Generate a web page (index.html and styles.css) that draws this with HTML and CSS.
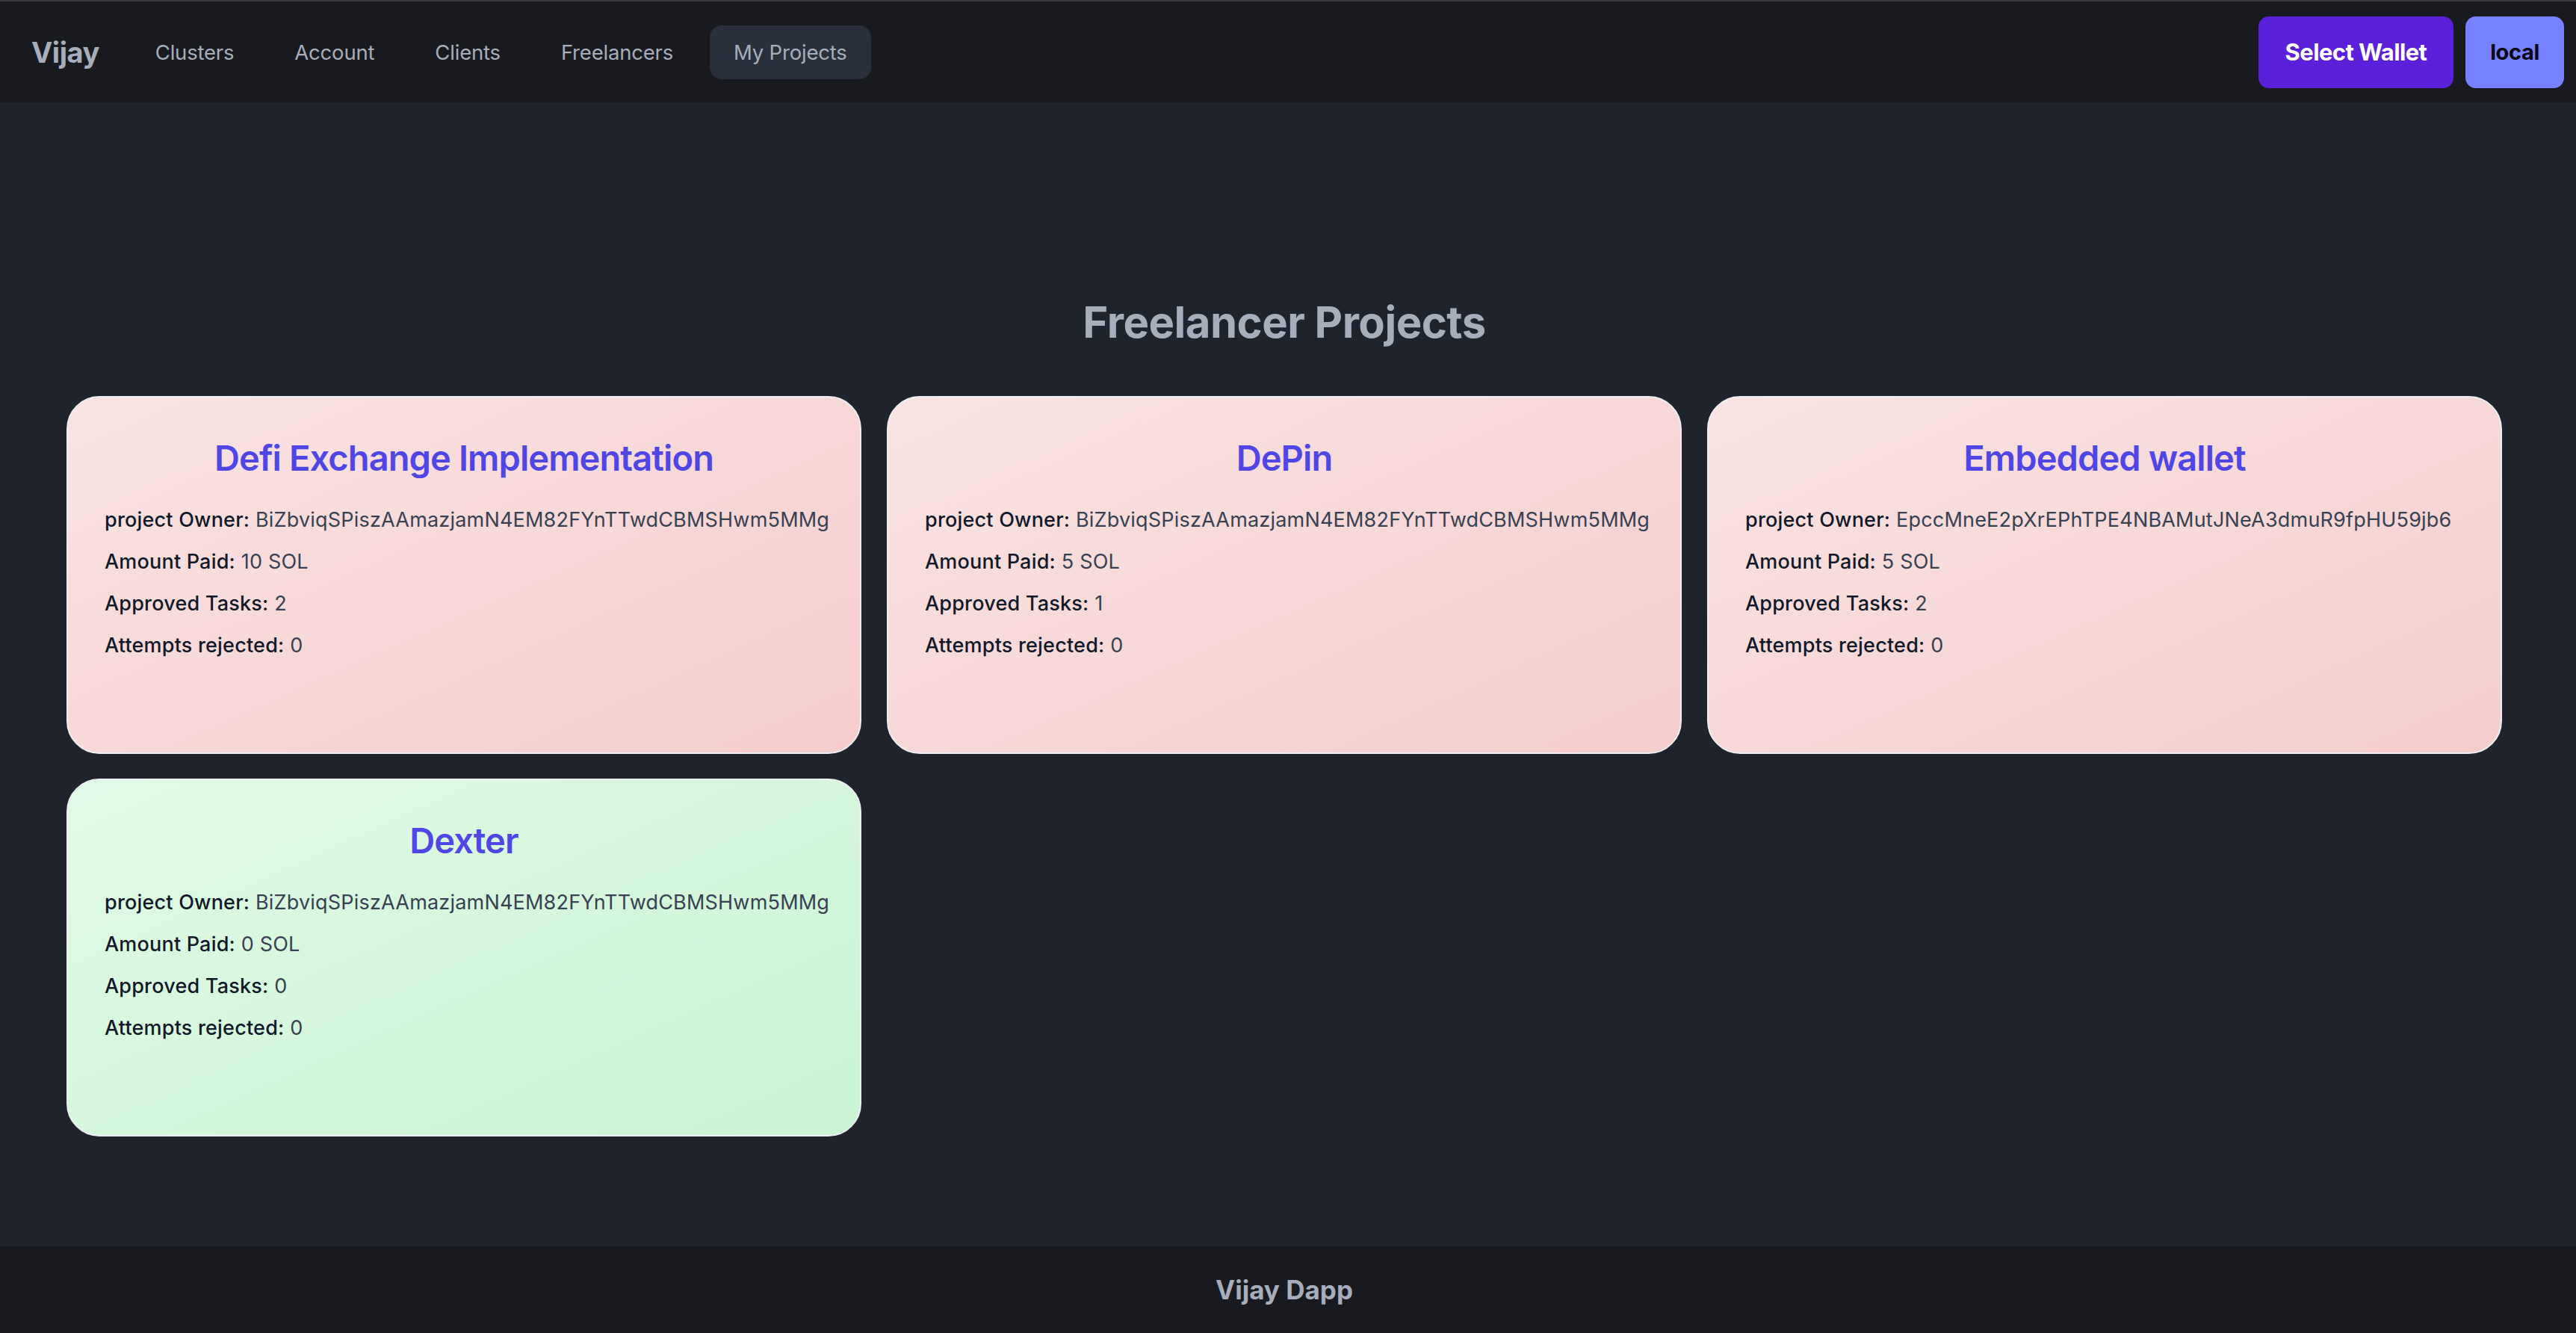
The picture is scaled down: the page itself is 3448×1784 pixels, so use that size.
FILE: index.html
```html
<!DOCTYPE html>
<html lang="en">
<head>
<meta charset="utf-8">
<title>Vijay Dapp</title>
<link rel="stylesheet" href="styles.css">
</head>
<body>
<div class="app">
  <header class="navbar">
    <div class="nav-left">
      <a class="brand">Vijay</a>
      <ul class="menu">
        <li><a class="menu-item">Clusters</a></li>
        <li><a class="menu-item">Account</a></li>
        <li><a class="menu-item">Clients</a></li>
        <li><a class="menu-item">Freelancers</a></li>
        <li><a class="menu-item active">My Projects</a></li>
      </ul>
    </div>
    <div class="nav-right">
      <button class="btn-wallet">Select Wallet</button>
      <button class="btn-cluster">local</button>
    </div>
  </header>

  <main class="main">
    <h1 class="page-title">Freelancer Projects</h1>
    <div class="grid">
      <div class="card card-red">
        <h2 class="card-title">Defi Exchange Implementation</h2>
        <p class="row"><span class="label">project Owner:</span> <span class="value">BiZbviqSPiszAAmazjamN4EM82FYnTTwdCBMSHwm5MMg</span></p>
        <p class="row"><span class="label">Amount Paid:</span> <span class="value">10 SOL</span></p>
        <p class="row"><span class="label">Approved Tasks:</span> <span class="value">2</span></p>
        <p class="row"><span class="label">Attempts rejected:</span> <span class="value">0</span></p>
      </div>
      <div class="card card-red">
        <h2 class="card-title">DePin</h2>
        <p class="row"><span class="label">project Owner:</span> <span class="value">BiZbviqSPiszAAmazjamN4EM82FYnTTwdCBMSHwm5MMg</span></p>
        <p class="row"><span class="label">Amount Paid:</span> <span class="value">5 SOL</span></p>
        <p class="row"><span class="label">Approved Tasks:</span> <span class="value">1</span></p>
        <p class="row"><span class="label">Attempts rejected:</span> <span class="value">0</span></p>
      </div>
      <div class="card card-red">
        <h2 class="card-title">Embedded wallet</h2>
        <p class="row"><span class="label">project Owner:</span> <span class="value">EpccMneE2pXrEPhTPE4NBAMutJNeA3dmuR9fpHU59jb6</span></p>
        <p class="row"><span class="label">Amount Paid:</span> <span class="value">5 SOL</span></p>
        <p class="row"><span class="label">Approved Tasks:</span> <span class="value">2</span></p>
        <p class="row"><span class="label">Attempts rejected:</span> <span class="value">0</span></p>
      </div>
      <div class="card card-green">
        <h2 class="card-title">Dexter</h2>
        <p class="row"><span class="label">project Owner:</span> <span class="value">BiZbviqSPiszAAmazjamN4EM82FYnTTwdCBMSHwm5MMg</span></p>
        <p class="row"><span class="label">Amount Paid:</span> <span class="value">0 SOL</span></p>
        <p class="row"><span class="label">Approved Tasks:</span> <span class="value">0</span></p>
        <p class="row"><span class="label">Attempts rejected:</span> <span class="value">0</span></p>
      </div>
    </div>
  </main>

  <footer class="footer">
    <p class="footer-text">Vijay Dapp</p>
  </footer>
</div>
</body>
</html>
```

FILE: styles.css
```css
* { box-sizing: border-box; }

html, body {
  margin: 0;
  padding: 0;
}

body {
  background: #1f232b;
  font-family: Inter, "Noto Sans", "Liberation Sans", sans-serif;
  color: #a6adbb;
}

.app {
  display: flex;
  flex-direction: column;
  min-height: 1784px;
}

/* Navbar */
.navbar {
  height: 137px;
  border-top: 2px solid #3a3b3d;
  background: #181a1f;
  display: flex;
  align-items: center;
  justify-content: space-between;
  padding: 0 16px 0 42px;
}

.nav-left {
  display: flex;
  align-items: center;
}

.brand {
  font-size: 38px;
  font-weight: 700;
  color: #a6adbb;
  letter-spacing: -0.5px;
  margin-right: 43px;
}

.menu {
  list-style: none;
  margin: 0;
  padding: 0;
  display: flex;
  align-items: center;
  gap: 17px;
}

.menu-item {
  display: flex;
  align-items: center;
  height: 72px;
  padding: 0 32px;
  border-radius: 16px;
  font-size: 27.5px;
  letter-spacing: -0.2px;
  color: #a6adbb;
}

.menu-item.active {
  background: #2a303b;
}

.nav-right {
  display: flex;
  align-items: center;
  gap: 16px;
}

.btn-wallet,
.btn-cluster {
  height: 96px;
  border: none;
  border-radius: 14px;
  font-family: Inter, "Noto Sans", "Liberation Sans", sans-serif;
  font-weight: 700;
  white-space: nowrap;
}

.btn-wallet {
  background: #5b20da;
  color: #ffffff;
  font-size: 31px;
  letter-spacing: -0.6px;
  padding: 0;
  width: 261px;
}

.btn-cluster {
  background: #7780ff;
  color: #050617;
  font-size: 29px;
  letter-spacing: -0.4px;
  width: 132px;
  padding: 0;
}

/* Main */
.main {
  flex: 1;
  padding: 259px 99px 40px 89px;
}

.page-title {
  margin: 0 0 64px;
  text-align: center;
  font-size: 58px;
  line-height: 70px;
  font-weight: 700;
  color: #a6adbb;
  letter-spacing: -0.5px;
}

.grid {
  display: grid;
  grid-template-columns: repeat(3, minmax(0, 1fr));
  gap: 33px 34px;
}

.card {
  height: 479px;
  min-width: 0;
  border-radius: 44px;
  border: 2px solid #eceef2;
  padding: 53px 49px 0 49px;
}

.card-red {
  background: linear-gradient(to bottom right, #fae4e4, #f5cccc);
}

.card-green {
  background: linear-gradient(to bottom right, #e2fae7, #c9f4d3);
}

.card-title {
  margin: 0 0 27px;
  text-align: center;
  font-size: 47px;
  line-height: 56px;
  font-weight: 600;
  color: #4f46e5;
  letter-spacing: -0.9px;
}

.row {
  margin: 0;
  font-size: 27px;
  line-height: 56px;
  letter-spacing: 0.2px;
  color: #374151;
  white-space: nowrap;
}

.label {
  font-weight: 500;
  color: #111827;
}

.value {
  color: #374151;
}

/* Footer */
.footer {
  height: 116px;
  background: #181a1f;
  display: flex;
  align-items: center;
  justify-content: center;
  padding-right: 10px;
}

.footer-text {
  margin: 0;
  font-size: 35px;
  font-weight: 700;
  color: #a6adbb;
}
```
